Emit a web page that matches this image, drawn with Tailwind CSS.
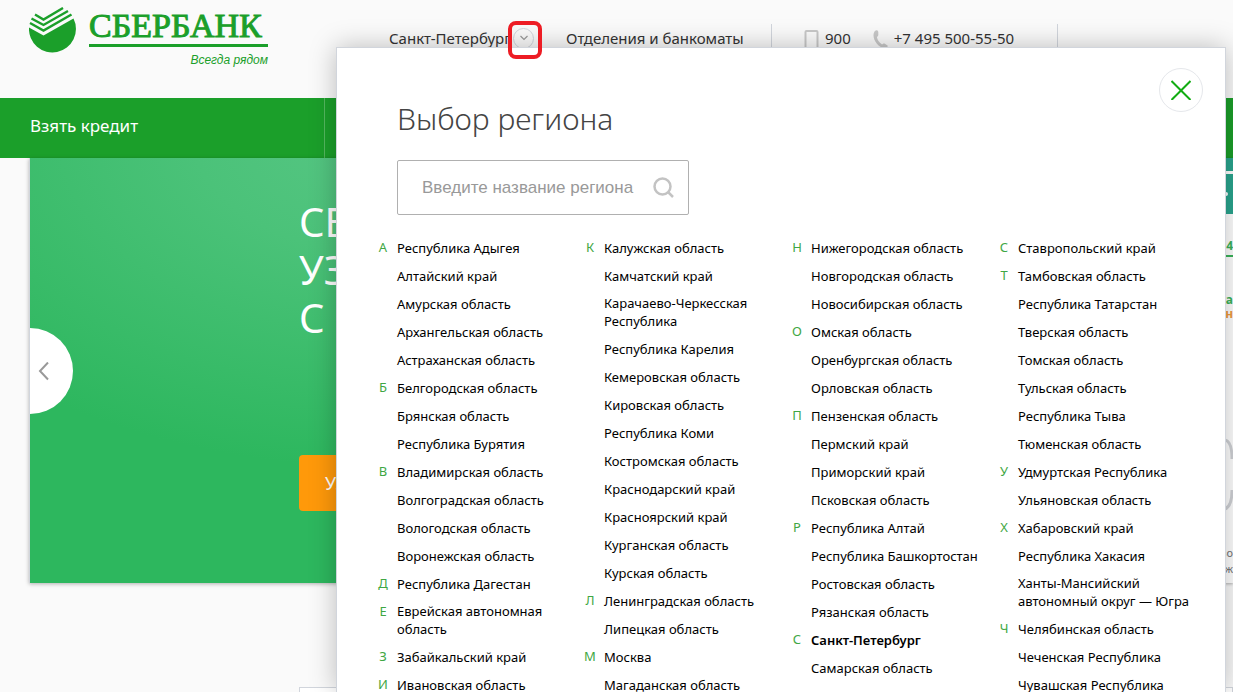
<!DOCTYPE html>
<html lang="ru">
<head>
<meta charset="utf-8">
<title>Сбербанк — выбор региона</title>
<script src="https://cdn.jsdelivr.net/npm/@tailwindcss/browser@4"></script>
</head>
<body class="bg-[#fafafa] font-['Noto_Sans','Open_Sans',sans-serif] text-[#333]">
<div class="relative h-screen overflow-hidden">

  <header class="flex h-[98px] items-start pl-[29px]">
    <a href="#" class="flex w-[360px] shrink-0 gap-3 pt-[7px] text-[#1b9f2a]" aria-label="Сбербанк">
      <svg class="h-[46px] w-12" viewBox="0 0 48 46" fill="none" aria-hidden="true">
        <path fill="#1b9f2a" d="M0 20.500 14.500 28.500 44.500 11.500A23.500 23.500 0 1 1 0 20.500Z"/>
        <g stroke="#1b9f2a" stroke-width="2.400"><path d="M6 7.500l8.500 5L34 1"/><path d="M2.500 11.500l12 6.500L39 4"/><path d="M1 16l13.500 7.500L42.500 7.500"/></g>
      </svg>
      <span class="block w-[179px]">
        <span class="block border-b-3 border-[#1b9f2a] pt-px font-['Liberation_Serif',serif] text-[34px] leading-9 [-webkit-text-stroke:1px_#1b9f2a]">СБЕРБАНК</span>
        <span class="block pt-[5px] text-right font-['Liberation_Sans',sans-serif] text-xs leading-4 italic">Всегда рядом</span>
      </span>
    </a>
    <nav class="flex items-center pt-6 text-[15px] leading-7 whitespace-nowrap" aria-label="Контакты">
      <a href="#" class="w-[124px]">Санкт-Петербург</a>
      <button type="button" class="mr-8 flex size-[21px] items-center justify-center rounded-full border border-gray-300" aria-label="Выбрать регион">
        <svg class="h-1.5 w-2" viewBox="0 0 8 6" fill="none" stroke="#999" stroke-width="1.200" aria-hidden="true"><path d="M.5 1 4 4.500 7.500 1"/></svg>
      </button>
      <a href="#" class="w-[205px]">Отделения и банкоматы</a>
      <span class="flex w-[287px] items-center border-x border-gray-300 pl-8">
        <svg class="mr-[6px] h-5 w-[15px]" viewBox="0 0 15 20" fill="none" stroke="#c8c8c8" stroke-width="2" aria-hidden="true"><rect x="1.500" y="3" width="12" height="17" rx="1"/></svg>
        <a href="#" class="mr-[22px]">900</a>
        <svg class="mr-[6px] h-5 w-[15px]" viewBox="0 0 15 20" fill="#c8c8c8" aria-hidden="true"><path d="M2 3C3 2 5 2 5.300 4v3C5 9 3.800 8 4 9.500c.5 3 2.500 5 4.500 6.500 1 .8 1.500-1 3-.5l3 2c1 1-1 2.500-3 2.500C6 20 .5 13 .5 7.500.5 5.500 1 4 2 3Z"/></svg>
        <a href="#">+7 495 500-55-50</a>
      </span>
    </nav>
  </header>

  <nav class="flex h-15 items-center bg-[#1b9f2a] text-white" aria-label="Основное меню">
    <a href="#" class="block w-[325px] border-r border-white/25 pb-1 pl-[30px] text-[17px] leading-14">Взять кредит</a>
  </nav>

  <main class="pl-[29px]">
    <div class="flex">
      <section class="relative h-[425px] grow border-l border-gray-300 bg-[#2db75e] bg-[radial-gradient(ellipse_560px_330px_at_360px_-20px,#57c684,#4bc279_35%,#2db75e)] pl-[269px] shadow-[0_1px_4px] shadow-black/30">
        <h2 class="pt-10 text-[40px] leading-12 text-white">СБ<br>УЗ<br>С П</h2>
        <button type="button" class="mt-[113px] block h-14 w-50 rounded bg-[#ff990a] pl-[26px] text-left text-lg text-white">Уз</button>
        <button type="button" class="absolute top-[170px] left-0 flex h-[86px] w-[43px] items-center rounded-r-full bg-white pl-2" aria-label="Назад">
          <svg class="h-[19px] w-3" viewBox="0 0 12 19" fill="none" stroke="#999" stroke-width="2" aria-hidden="true"><path d="M10 .5 2 9 10 17.500"/></svg>
        </button>
      </section>
      <aside class="h-[425px] w-10 overflow-hidden bg-white text-right shadow-[0_1px_3px] shadow-black/30">
        <div class="h-[13px] bg-[#2aa58e]"></div>
        <div class="mt-[3px] flex h-10 items-center justify-end bg-[#2aa58e] pr-[5px]"><span class="size-1 rounded-full bg-white"></span></div>
        <p class="mt-[22px] border-b-2 border-[#3bb35a] text-xs leading-[19px] font-bold text-[#3bb35a]">4</p>
        <p class="mt-[35px] text-xs leading-4 font-bold text-[#3bb35a]">а</p>
        <p class="text-xs leading-3 font-bold text-[#f09a3c]">н</p>
        <svg class="mt-[118px] ml-auto h-[74px] w-2" viewBox="0 0 8 74" fill="none" stroke="#d0d2d6" stroke-width="3" aria-hidden="true"><path d="M0 2C5 3 7 10 7 21M7 52c0 11-2 17-7 19"/></svg>
        <p class="mt-[33px] text-[11px] leading-4 text-[#777]">зо<br>ож</p>
      </aside>
    </div>
    <div class="mt-[104px] ml-[270px] h-10 border border-gray-300 bg-white"></div>
  </main>

  <section role="dialog" aria-labelledby="region-title" class="absolute top-[47px] right-[7px] bottom-0 left-[336px] overflow-hidden border border-b-0 border-gray-300 bg-white shadow-[0_0_25px] shadow-black/25">
    <div class="flex items-start justify-between pt-5 pr-[22px] pl-15">
      <h1 id="region-title" class="pt-[29px] text-[30px] leading-[44px] font-light text-[#444]">Выбор региона</h1>
      <button type="button" class="flex size-11 items-center justify-center rounded-full border border-gray-200" aria-label="Закрыть">
        <svg class="size-5" viewBox="0 0 20 20" fill="none" stroke="#12ac12" stroke-width="2" aria-hidden="true"><path d="M.5 1l19 19M19.500 1l-19 19"/></svg>
      </button>
    </div>
    <form class="mt-[19px] ml-15 flex h-[55px] w-[292px] items-center rounded-xs border border-[#b0b0b0] pr-[14px] pl-6">
      <input type="text" aria-label="Название региона" placeholder="Введите название региона" class="min-w-0 grow font-['Liberation_Sans',sans-serif] text-[17px] outline-none placeholder:text-[#999]">
      <button type="submit" aria-label="Найти">
        <svg class="size-[21px]" viewBox="0 0 21 21" fill="none" stroke="#c3c3c3" stroke-width="2.500" aria-hidden="true"><circle cx="9.500" cy="9.500" r="8"/><path d="m15 15 5 5"/></svg>
      </button>
    </form>
    <div id="regions" class="mt-[19px] ml-[38px] grid grid-cols-4 pr-[22px] text-[13px] leading-[18px] text-black"></div>
  </section>

  <div class="absolute top-[21px] left-[508px] h-[38px] w-[34px] rounded-lg border-4 border-[#ed1c24]"></div>
</div>

<script>
const columns = [
  ['А|Республика Адыгея','Алтайский край','Амурская область','Архангельская область','Астраханская область','Б|Белгородская область','Брянская область','Республика Бурятия','В|Владимирская область','Волгоградская область','Вологодская область','Воронежская область','Д|Республика Дагестан','Е|Еврейская автономная область','З|Забайкальский край','И|Ивановская область'],
  ['К|Калужская область','Камчатский край','Карачаево-Черкесская Республика','Республика Карелия','Кемеровская область','Кировская область','Республика Коми','Костромская область','Краснодарский край','Красноярский край','Курганская область','Курская область','Л|Ленинградская область','Липецкая область','М|Москва','Магаданская область'],
  ['Н|Нижегородская область','Новгородская область','Новосибирская область','О|Омская область','Оренбургская область','Орловская область','П|Пензенская область','Пермский край','Приморский край','Псковская область','Р|Республика Алтай','Республика Башкортостан','Ростовская область','Рязанская область','С|Санкт-Петербург','Самарская область'],
  ['С|Ставропольский край','Т|Тамбовская область','Республика Татарстан','Тверская область','Томская область','Тульская область','Республика Тыва','Тюменская область','У|Удмуртская Республика','Ульяновская область','Х|Хабаровский край','Республика Хакасия','Ханты-Мансийский автономный округ — Югра','Ч|Челябинская область','Чеченская Республика','Чувашская Республика']
];
document.getElementById('regions').innerHTML = columns.map(list =>
  '<ul>' + list.map(entry => {
    const [name, letter = ''] = entry.split('|').reverse();
    const weight = name === 'Санкт-Петербург' ? 'font-semibold' : 'font-normal';
    return `<li class="flex min-h-7 items-center gap-1.5 pt-1 pb-[5px]"><span class="w-4 shrink-0 self-start text-center text-[#3fa744]">${letter}</span><a href="#" class="max-w-[176px] ${weight}">${name}</a></li>`;
  }).join('') + '</ul>').join('');
</script>
</body>
</html>
